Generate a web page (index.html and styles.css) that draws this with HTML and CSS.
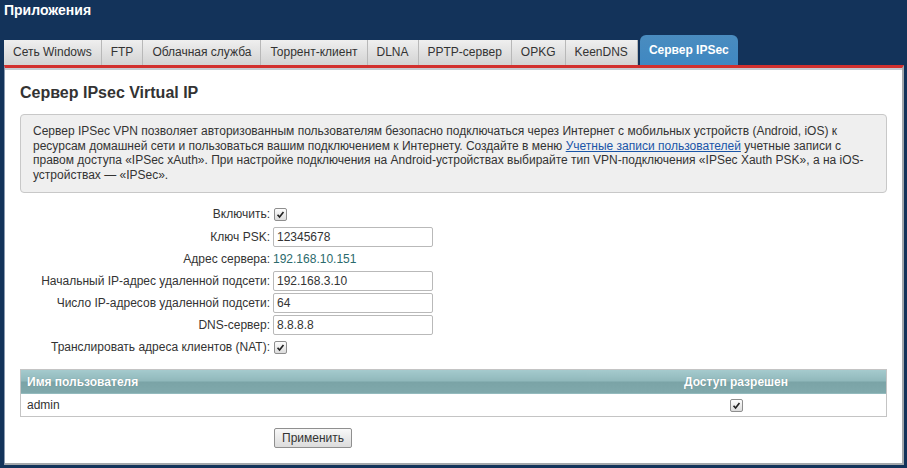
FILE: index.html
```html
<!DOCTYPE html>
<html lang="ru">
<head>
<meta charset="UTF-8">
<meta name="viewport" content="width=device-width, initial-scale=1.0">
<title>Приложения</title>
<link rel="stylesheet" href="styles.css">
</head>
<body>

<div class="header">
    <h1>Приложения</h1>
</div>

<div class="tabs">
    <a class="tab" href="#">Сеть Windows</a>
    <a class="tab" href="#">FTP</a>
    <a class="tab" href="#">Облачная служба</a>
    <a class="tab" href="#">Торрент-клиент</a>
    <a class="tab" href="#">DLNA</a>
    <a class="tab" href="#">PPTP-сервер</a>
    <a class="tab" href="#">OPKG</a>
    <a class="tab" href="#">KeenDNS</a>
    <a class="tab active" href="#">Сервер IPSec</a>
</div>

<div class="panel">
    <h2>Сервер IPsec Virtual IP</h2>

    <div class="info">
        Сервер IPSec VPN позволяет авторизованным пользователям безопасно подключаться через Интернет с мобильных устройств (Android, iOS) к<br>
        ресурсам домашней сети и пользоваться вашим подключением к Интернету. Создайте в меню <a href="#">Учетные записи пользователей</a> учетные записи с<br>
        правом доступа «IPSec xAuth». При настройке подключения на Android-устройствах выбирайте тип VPN-подключения «IPSec Xauth PSK», а на iOS-<br>
        устройствах — «IPSec».
    </div>

    <div class="form">
        <label class="row-tall">Включить:</label>
        <div class="row-tall"><span class="check"><svg viewBox="0 0 13 13"><path d="M3 6.8 L5.4 9.4 L10 3.6" /></svg></span></div>

        <label>Ключ PSK:</label>
        <div><input type="text" value="12345678"></div>

        <label>Адрес сервера:</label>
        <div class="value">192.168.10.151</div>

        <label>Начальный IP-адрес удаленной подсети:</label>
        <div><input type="text" value="192.168.3.10"></div>

        <label>Число IP-адресов удаленной подсети:</label>
        <div><input type="text" value="64"></div>

        <label>DNS-сервер:</label>
        <div><input type="text" value="8.8.8.8"></div>

        <label class="row-tall">Транслировать адреса клиентов (NAT):</label>
        <div class="row-tall"><span class="check"><svg viewBox="0 0 13 13"><path d="M3 6.8 L5.4 9.4 L10 3.6" /></svg></span></div>
    </div>

    <table class="users">
        <thead>
            <tr>
                <th>Имя пользователя</th>
                <th class="col-access">Доступ разрешен</th>
            </tr>
        </thead>
        <tbody>
            <tr>
                <td>admin</td>
                <td class="col-access"><span class="check"><svg viewBox="0 0 13 13"><path d="M3 6.8 L5.4 9.4 L10 3.6" /></svg></span></td>
            </tr>
        </tbody>
    </table>

    <div class="actions">
        <button type="button">Применить</button>
    </div>
</div>

</body>
</html>
```

FILE: styles.css
```css
body {
    margin: 0;
    background-color: #13335a;
    font-family: "Liberation Sans", Arial, sans-serif;
    font-size: 12px;
    color: #333;
}

.header h1 {
    margin: 0;
    padding: 2px 4px;
    font-size: 14px;
    line-height: 16px;
    font-weight: bold;
    color: #fff;
}

.tabs {
    display: flex;
    align-items: flex-end;
    height: 30px;
    margin-top: 15px;
    padding-left: 4px;
}
.tab {
    display: block;
    height: 25px;
    line-height: 25px;
    padding: 0 9px;
    box-sizing: border-box;
    background: linear-gradient(#efefef, #d3d3d3);
    border-right: 1px solid #b8b8b8;
    color: #333;
    text-decoration: none;
}
.tab.active {
    height: 30px;
    line-height: 30px;
    margin-left: 2px;
    padding: 0 9px;
    border: none;
    border-radius: 6px 6px 0 0;
    background: linear-gradient(#4a8cbf, #3f88c2);
    color: #fff;
    font-weight: bold;
}

.panel {
    margin: 0 3px 0 4px;
    padding: 15px 15px 15px 15px;
    background-color: #fff;
    border-top: 3px solid #d2302e;
    border-left: 1px solid #8a9ab0;
    border-right: 2px solid #a4a8ac;
    border-bottom: 2px solid #a4a8ac;
    box-shadow: inset 0 2px 0 #c6cbd1;
}

h2 {
    margin: 0;
    font-size: 16px;
    line-height: 20px;
    font-weight: bold;
    color: #333;
}

.info {
    margin-top: 11px;
    padding: 9px 12px;
    background-color: #efefef;
    border: 1px solid #c8c8c8;
    border-radius: 4px;
    line-height: 14.67px;
}
.info a {
    color: #1a55a8;
}

.form {
    display: grid;
    grid-template-columns: 250px 1fr;
    column-gap: 3px;
    margin-top: 10px;
}
.form label,
.form div {
    display: flex;
    align-items: center;
    height: 22px;
}
.form label {
    justify-content: flex-end;
}
.form .row-tall {
    height: 23px;
}
.form .value {
    color: #2b6a6c;
}
.form input {
    width: 160px;
    height: 20px;
    box-sizing: border-box;
    padding: 0 3px;
    border: 1px solid #b9b9b9;
    border-radius: 2px;
    font-family: "Liberation Sans", Arial, sans-serif;
    font-size: 12px;
    color: #333;
}

.check {
    display: inline-block;
    width: 13px;
    height: 13px;
    margin-left: 1px;
    box-sizing: border-box;
    border: 1px solid #8e8e8e;
    border-radius: 2px;
    background: linear-gradient(#fdfdfd, #dcdcdc);
    vertical-align: middle;
}
.check svg {
    display: block;
    width: 11px;
    height: 11px;
}
.check path {
    fill: none;
    stroke: #222;
    stroke-width: 2;
}

.users {
    width: 100%;
    margin-top: 10px;
    border-collapse: collapse;
    border: 1px solid #c4c4c4;
}
.users th {
    height: 24px;
    padding: 0 6px;
    text-align: left;
    color: #fff;
    font-weight: bold;
    background: linear-gradient(#a6cbce, #8fb7ba 50%, #7aa3a6 51%, #80a9ac);
    text-shadow: 0 0 1px rgba(0, 0, 0, 0.2);
}
.users td {
    height: 22px;
    padding: 0 6px;
}
.users .col-access {
    width: 288px;
    text-align: center;
}
.users td .check {
    margin-left: 0;
}

.actions {
    margin-top: 11px;
    padding-left: 254px;
}
.actions button {
    height: 20px;
    padding: 0 7px;
    background: linear-gradient(#f8f8f8, #dcdcdc);
    border: 1px solid #8f8f8f;
    border-radius: 2px;
    font-family: "Liberation Sans", Arial, sans-serif;
    font-size: 12px;
    color: #333;
}
```
